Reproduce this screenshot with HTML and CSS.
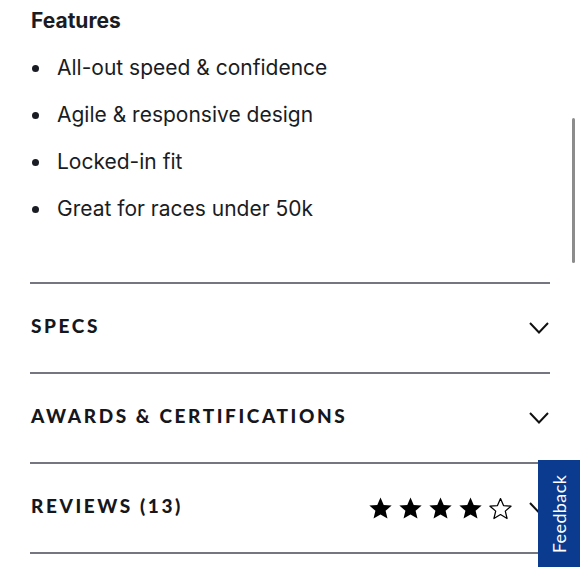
FILE: index.html
```html
<!DOCTYPE html>
<html>
<head>
<meta charset="utf-8">
<link rel="stylesheet" href="styles.css">
</head>
<body>
<main class="page">
  <h2 class="features-title">Features</h2>
  <ul class="features">
    <li>All-out speed &amp; confidence</li>
    <li>Agile &amp; responsive design</li>
    <li>Locked-in fit</li>
    <li>Great for races under 50k</li>
  </ul>
  <section class="acc">
    <div class="acc-row"><span class="acc-title">SPECS</span><svg class="chev" viewBox="0 0 20 12"><path d="M1 1 L10 10.5 L19 1" fill="none" stroke="#111" stroke-width="2"/></svg></div>
    <div class="acc-row"><span class="acc-title">AWARDS &amp; CERTIFICATIONS</span><svg class="chev" viewBox="0 0 20 12"><path d="M1 1 L10 10.5 L19 1" fill="none" stroke="#111" stroke-width="2"/></svg></div>
    <div class="acc-row last"><span class="acc-title">REVIEWS (13)</span>
      <div class="stars">
        <svg viewBox="0 0 24 24"><path d="M12 1.5l3.1 7.1 7.6.6-5.8 5 1.8 7.5L12 17.7l-6.7 4 1.8-7.5-5.8-5 7.6-.6z" fill="#000"/></svg>
        <svg viewBox="0 0 24 24"><path d="M12 1.5l3.1 7.1 7.6.6-5.8 5 1.8 7.5L12 17.7l-6.7 4 1.8-7.5-5.8-5 7.6-.6z" fill="#000"/></svg>
        <svg viewBox="0 0 24 24"><path d="M12 1.5l3.1 7.1 7.6.6-5.8 5 1.8 7.5L12 17.7l-6.7 4 1.8-7.5-5.8-5 7.6-.6z" fill="#000"/></svg>
        <svg viewBox="0 0 24 24"><path d="M12 1.5l3.1 7.1 7.6.6-5.8 5 1.8 7.5L12 17.7l-6.7 4 1.8-7.5-5.8-5 7.6-.6z" fill="#000"/></svg>
        <svg viewBox="0 0 24 24"><path d="M12 2.5l2.9 6.7 7.2.6-5.5 4.7 1.7 7.1L12 17.8l-6.3 3.8 1.7-7.1-5.5-4.7 7.2-.6z" fill="none" stroke="#000" stroke-width="1.2" stroke-linejoin="round"/></svg>
      </div>
      <svg class="chev" viewBox="0 0 20 12"><path d="M1 1 L10 10.5 L19 1" fill="none" stroke="#111" stroke-width="2"/></svg>
    </div>
  </section>
</main>
<div class="scrollbar"></div>
<button class="feedback"><span>Feedback</span></button>
</body>
</html>
```
FILE: styles.css
```css
html, body {
  margin: 0;
  padding: 0;
  background: #fff;
}
body {
  font-family: Inter, "Noto Sans", sans-serif;
  color: #1a1c24;
  width: 580px;
  height: 580px;
  overflow: hidden;
}
.page {
  padding: 0 30px 0 30px;
  width: 520px;
}
.features-title {
  margin: 0;
  padding-top: 9px;
  font-size: 21px;
  line-height: 24px;
  font-weight: 700;
  padding-left: 1px;
}
.features {
  list-style: none;
  margin: 0;
  padding: 12px 0 0 0;
  height: 237px;
}
.features li {
  position: relative;
  height: 47px;
  line-height: 46px;
  font-size: 21px;
  padding-left: 27px;
}
.features li::before {
  content: "";
  position: absolute;
  left: 2px;
  top: 20px;
  width: 7px;
  height: 7px;
  border-radius: 50%;
  background: #1a1c24;
}
.acc-row {
  border-top: 2px solid #74777f;
  height: 88px;
  display: flex;
  align-items: center;
  padding-left: 1px;
}
.acc-row.last {
  border-bottom: 2px solid #74777f;
}
.acc-title {
  font-family: Lato, sans-serif;
  font-size: 19px;
  font-weight: 900;
  letter-spacing: 2.6px;
  flex: 1;
  color: #16171d;
  padding-bottom: 5px;
}
.chev {
  width: 20px;
  height: 12px;
  margin-right: 1px;
  margin-bottom: 1px;
}
.stars {
  display: flex;
  gap: 5px;
  margin-right: 16px;
}
.stars svg {
  width: 25px;
  height: 25px;
}
.scrollbar {
  position: absolute;
  left: 572px;
  top: 118px;
  width: 3px;
  height: 145px;
  border-radius: 2px;
  background: #8c8c8c;
}
.feedback {
  position: absolute;
  left: 538px;
  top: 460px;
  width: 42px;
  height: 107px;
  border: 0;
  padding: 0;
  background: #0a3b8f;
  display: flex;
  align-items: center;
  justify-content: center;
}
.feedback span {
  display: block;
  transform: rotate(-90deg);
  color: #fff;
  font-family: Lato, sans-serif;
  font-size: 18px;
  white-space: nowrap;
  letter-spacing: 0.4px;
}
```
